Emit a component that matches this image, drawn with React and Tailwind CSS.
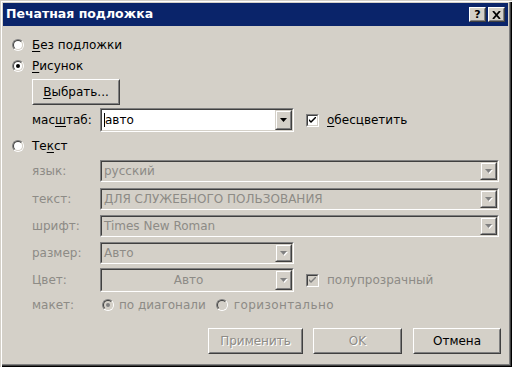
import React from 'react';

// classic sunken 3D frame (text fields, combo boxes)
const Sunken = ({ className = '', innerClass = '', children }) => (
  <div className={`border border-t-[#808080] border-l-[#808080] border-r-white border-b-white ${className}`}>
    <div className={`h-full border border-t-[#404040] border-l-[#404040] border-r-[#d4d0c8] border-b-[#d4d0c8] ${innerClass}`}>
      {children}
    </div>
  </div>
);

// classic raised 3D frame (buttons)
const Raised = ({ className = '', innerClass = '', children }) => (
  <div className={`border border-t-white border-l-white border-r-[#404040] border-b-[#404040] ${className}`}>
    <div className={`h-full border border-t-[#d4d0c8] border-l-[#d4d0c8] border-r-[#808080] border-b-[#808080] ${innerClass}`}>
      {children}
    </div>
  </div>
);

const ArrowBtn = ({ disabled }) => (
  <div className="h-full w-[17px] border border-t-[#d4d0c8] border-l-[#d4d0c8] border-r-[#404040] border-b-[#404040] bg-[#d4d0c8]">
    <div className="h-full border border-t-white border-l-white border-r-[#808080] border-b-[#808080] flex items-center justify-center">
      <svg width="8" height="5" viewBox="0 0 8 5">
        {disabled && <polygon points="1,1 8,1 4.5,5" fill="#ffffff" />}
        <polygon points="0,0 7,0 3.5,4" fill={disabled ? '#808080' : '#000000'} />
      </svg>
    </div>
  </div>
);

const Radio = ({ checked, disabled }) => (
  <div className="w-[12px] h-[12px] rounded-full border border-t-[#808080] border-l-[#808080] border-r-white border-b-white shrink-0">
    <div
      className={`w-full h-full rounded-full border border-t-[#404040] border-l-[#404040] border-r-[#d4d0c8] border-b-[#d4d0c8] flex items-center justify-center ${disabled ? 'bg-[#d4d0c8]' : 'bg-white'}`}
    >
      {checked && (
        <div className={`w-[4px] h-[4px] rounded-full ${disabled ? 'bg-[#808080]' : 'bg-black'}`} />
      )}
    </div>
  </div>
);

const Check = ({ disabled }) => (
  <Sunken className="w-[13px] h-[13px] shrink-0" innerClass={`flex items-center justify-center ${disabled ? 'bg-[#d4d0c8]' : 'bg-white'}`}>
    <svg width="7" height="7" viewBox="0 0 7 7">
      <path d="M0 2 L0 4 L2 6 L7 1 L7 -1 L2 4 Z" fill={disabled ? '#808080' : '#000000'} />
    </svg>
  </Sunken>
);

const U = ({ children }) => <span className="underline underline-offset-2">{children}</span>;

const Label = ({ children }) => (
  <div className="w-[68px] ml-[20px] text-[#8d8b86] shrink-0">{children}</div>
);

const DisabledCombo = ({ value, width, center }) => (
  <Sunken className={`${width} h-full`} innerClass="flex bg-[#d4d0c8]">
    <div className={`flex-1 flex items-center text-[#8d8b86] ${center ? 'justify-center' : 'pl-[2px]'}`}>{value}</div>
    <ArrowBtn disabled />
  </Sunken>
);

const DlgButton = ({ width, disabled, children }) => (
  <Raised className={`${width} h-full bg-[#d4d0c8]`} innerClass="flex items-center justify-center">
    <span className={disabled ? 'text-[#8d8b86] [text-shadow:1px_1px_0_#ffffff]' : 'text-black'}>{children}</span>
  </Raised>
);

export default function App() {
  return (
    <div className="w-[512px] h-[367px] bg-[#d4d0c8] pt-[3px] pl-[3px] pr-[4px] pb-[5px] flex flex-col font-['DejaVu_Sans',Verdana,sans-serif] text-[12px] text-black shadow-[inset_1px_1px_0_#d4d0c8,inset_2px_2px_0_#ffffff,inset_-1px_-1px_0_#000000,inset_-2px_-2px_0_#404040,inset_-3px_-3px_0_#808080]">
      {/* title bar */}
      <div className="h-[23px] bg-[#0a246a] flex items-center pl-[3px] pr-[3px] shrink-0">
        <span className="flex-1 text-white font-bold text-[12.5px] leading-none">Печатная подложка</span>
        <Raised className="w-[17px] h-[15px] bg-[#d4d0c8]" innerClass="flex items-center justify-center">
          <span className="font-bold text-[11px] leading-none">?</span>
        </Raised>
        <Raised className="w-[17px] h-[15px] ml-[2px] bg-[#d4d0c8]" innerClass="flex items-center justify-center">
          <svg width="9" height="8" viewBox="0 0 9 8">
            <path d="M1 0 L8 8 M8 0 L1 8" stroke="#000" strokeWidth="1.8" />
          </svg>
        </Raised>
      </div>

      {/* body */}
      <div className="flex flex-col pl-[9px]">
        <div className="mt-[8px] h-[21px] flex items-center">
          <Radio />
          <span className="ml-[8px]"><U>Б</U>ез подложки</span>
        </div>
        <div className="h-[21px] flex items-center">
          <Radio checked />
          <span className="ml-[8px]"><U>Р</U>исунок</span>
        </div>
        <div className="mt-[3px] ml-[20px] h-[26px]">
          <DlgButton width="w-[88px]"><U>В</U>ыбрать...</DlgButton>
        </div>
        <div className="mt-[3px] h-[24px] flex items-center">
          <div className="w-[68px] ml-[20px] shrink-0">мас<U>ш</U>таб:</div>
          <Sunken className="w-[194px] h-full" innerClass="flex bg-white">
            <div className="flex-1 flex items-center pl-[2px]">
              <div className="w-[1px] h-[14px] bg-black" />
              <span>авто</span>
            </div>
            <ArrowBtn />
          </Sunken>
          <div className="ml-[12px]"><Check /></div>
          <span className="ml-[8px]"><U>о</U>бесцветить</span>
        </div>
        <div className="mt-[4px] h-[20px] flex items-center">
          <Radio />
          <span className="ml-[8px]">Те<U>к</U>ст</span>
        </div>
        <div className="mt-[4px] h-[22px] flex items-center">
          <Label>язык:</Label>
          <DisabledCombo width="w-[399px]" value="русский" />
        </div>
        <div className="mt-[6px] h-[22px] flex items-center">
          <Label>текст:</Label>
          <DisabledCombo width="w-[399px]" value="ДЛЯ СЛУЖЕБНОГО ПОЛЬЗОВАНИЯ" />
        </div>
        <div className="mt-[5px] h-[22px] flex items-center">
          <Label>шрифт:</Label>
          <DisabledCombo width="w-[399px]" value="Times New Roman" />
        </div>
        <div className="mt-[5px] h-[22px] flex items-center">
          <Label>размер:</Label>
          <DisabledCombo width="w-[194px]" value="Авто" />
        </div>
        <div className="mt-[4px] h-[24px] flex items-center">
          <Label>Цвет:</Label>
          <DisabledCombo width="w-[194px]" value="Авто" center />
          <div className="ml-[12px]"><Check disabled /></div>
          <span className="ml-[8px] text-[#8d8b86]">полупрозрачный</span>
        </div>
        <div className="mt-[3px] h-[20px] flex items-center text-[#8d8b86]">
          <Label>макет:</Label>
          <div className="ml-[2px]"><Radio checked disabled /></div>
          <span className="ml-[5px]">по диагонали</span>
          <div className="ml-[10px]"><Radio disabled /></div>
          <span className="ml-[6px] tracking-[0.4px]">горизонтально</span>
        </div>
        <div className="mt-[13px] h-[26px] flex justify-end pr-[7px]">
          <DlgButton width="w-[95px]" disabled>Применить</DlgButton>
          <div className="ml-[10px] h-full"><DlgButton width="w-[89px]" disabled>OK</DlgButton></div>
          <div className="ml-[11px] h-full"><DlgButton width="w-[88px]">Отмена</DlgButton></div>
        </div>
      </div>
    </div>
  );
}
